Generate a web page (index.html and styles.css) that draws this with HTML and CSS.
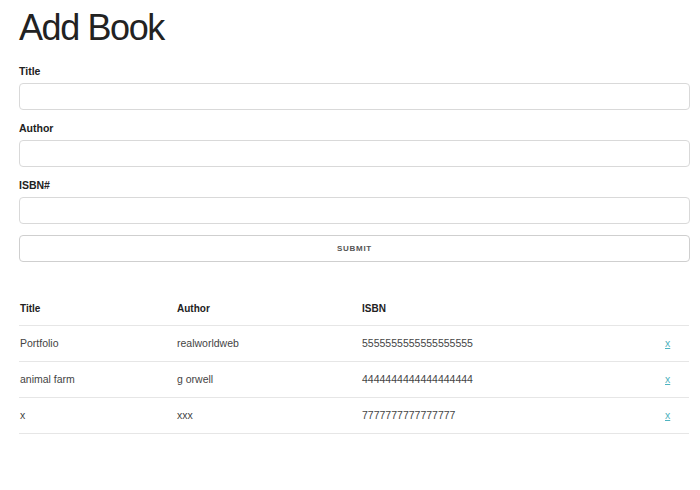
FILE: index.html
```html
<!DOCTYPE html>
<html>
<head>
<meta charset="utf-8">
<link rel="stylesheet" href="styles.css">
</head>
<body>
<div class="container">
  <h1 class="page-title">Add Book</h1>
  <form class="book-form">
    <label class="field-label" for="title">Title</label>
    <input class="field-input" id="title" type="text">
    <label class="field-label" for="author">Author</label>
    <input class="field-input" id="author" type="text">
    <label class="field-label" for="isbn">ISBN#</label>
    <input class="field-input" id="isbn" type="text">
    <button class="submit-btn" type="button">Submit</button>
  </form>
  <table class="book-table">
    <colgroup>
      <col class="col-title">
      <col class="col-author">
      <col class="col-isbn">
      <col class="col-del">
    </colgroup>
    <thead>
      <tr><th>Title</th><th>Author</th><th>ISBN</th><th></th></tr>
    </thead>
    <tbody>
      <tr><td>Portfolio</td><td>realworldweb</td><td>5555555555555555555</td><td><a class="del-link" href="#">x</a></td></tr>
      <tr><td>animal farm</td><td>g orwell</td><td>4444444444444444444</td><td><a class="del-link" href="#">x</a></td></tr>
      <tr><td>x</td><td>xxx</td><td>7777777777777777</td><td><a class="del-link" href="#">x</a></td></tr>
    </tbody>
  </table>
</div>
</body>
</html>
```

FILE: styles.css
```css
* { box-sizing: border-box; }
html, body { margin: 0; padding: 0; background: #fff; }
body {
  font-family: "Liberation Sans", Arial, sans-serif;
  color: #222;
}
.container {
  padding: 6px 10px 0 19px;
}
.page-title {
  margin: 0;
  font-size: 36px;
  line-height: 44px;
  font-weight: 400;
  letter-spacing: -1.4px;
  color: #222;
}
.book-form {
  display: flex;
  flex-direction: column;
  margin-top: 14px;
}
.field-label {
  font-size: 10.5px;
  line-height: 14px;
  font-weight: 700;
  color: #222;
  margin-bottom: 5px;
}
.field-input {
  height: 27px;
  border: 1px solid #d9d9d9;
  border-radius: 4px;
  background: #fff;
  margin: 0 0 11px 0;
  padding: 0 8px;
  box-shadow: none;
}
.submit-btn {
  height: 27px;
  margin-top: 0;
  border: 1px solid #cfcfcf;
  border-radius: 4px;
  background: #fff;
  font-family: "Liberation Sans", Arial, sans-serif;
  font-size: 8px;
  font-weight: 700;
  letter-spacing: 0.7px;
  text-transform: uppercase;
  color: #555;
  padding: 0;
}
.book-table {
  width: 670px;
  margin-top: 31px;
  border-collapse: collapse;
  table-layout: fixed;
}
.col-title { width: 157px; }
.col-author { width: 185px; }
.col-isbn { width: 303px; }
.col-del { width: 25px; }
.book-table th {
  text-align: left;
  font-size: 10px;
  font-weight: 700;
  color: #222;
  height: 32px;
  padding: 0 0 0 1px;
  border-bottom: 1px solid #e6e6e6;
  vertical-align: middle;
}
.book-table td {
  font-size: 10.5px;
  color: #444;
  height: 36px;
  padding: 0 0 0 1px;
  border-bottom: 1px solid #e6e6e6;
  vertical-align: middle;
}
.del-link {
  color: #4fb3c0;
  text-decoration: underline;
}
```
